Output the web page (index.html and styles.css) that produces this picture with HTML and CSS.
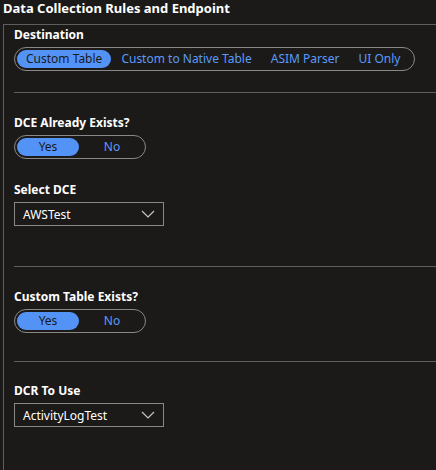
FILE: index.html
```html
<!DOCTYPE html>
<html>
<head>
<meta charset="utf-8">
<link rel="stylesheet" href="styles.css">
</head>
<body>
<div class="page">
  <div class="title">Data Collection Rules and Endpoint</div>
  <div class="box">
    <div class="section first">
      <div class="label">Destination</div>
      <div class="pills wide">
        <span class="pill sel">Custom Table</span>
        <span class="pill">Custom to Native Table</span>
        <span class="pill">ASIM Parser</span>
        <span class="pill">UI Only</span>
      </div>
    </div>
    <div class="sep"></div>
    <div class="section">
      <div class="label">DCE Already Exists?</div>
      <div class="pills toggle">
        <span class="pill sel">Yes</span>
        <span class="pill">No</span>
      </div>
      <div class="label lbl2">Select DCE</div>
      <div class="dropdown">
        <span>AWSTest</span>
        <svg class="chev" width="14" height="8" viewBox="0 0 14 8"><path d="M1 1 L7 7 L13 1" fill="none" stroke="#c8c6c4" stroke-width="1.2"/></svg>
      </div>
    </div>
    <div class="sep sep2"></div>
    <div class="section">
      <div class="label">Custom Table Exists?</div>
      <div class="pills toggle">
        <span class="pill sel">Yes</span>
        <span class="pill">No</span>
      </div>
    </div>
    <div class="sep sep3"></div>
    <div class="section">
      <div class="label">DCR To Use</div>
      <div class="dropdown">
        <span>ActivityLogTest</span>
        <svg class="chev" width="14" height="8" viewBox="0 0 14 8"><path d="M1 1 L7 7 L13 1" fill="none" stroke="#c8c6c4" stroke-width="1.2"/></svg>
      </div>
    </div>
  </div>
</div>
</body>
</html>
```

FILE: styles.css
```css
html, body {
  margin: 0;
  padding: 0;
  background: #1b1a19;
  height: 100%;
}
body {
  font-family: "Noto Sans", "Open Sans", sans-serif;
  font-size: 12px;
  color: #ffffff;
  overflow: hidden;
}
.page {
  padding: 0 0 0 3px;
}
.title {
  font-weight: 700;
  font-size: 13px;
  line-height: 16px;
  height: 24px;
}
.box {
  border-top: 1px solid #605e5c;
  border-left: 1px solid #605e5c;
  padding: 2px 0 0 10px;
  height: 460px;
}
.label {
  font-weight: 700;
  font-size: 12px;
  line-height: 16px;
  margin-bottom: 4px;
}
.pills {
  display: flex;
  align-items: center;
  border: 1px solid #8a8886;
  border-radius: 12px;
  height: 22px;
  box-sizing: content-box;
  padding: 0 2px;
  white-space: nowrap;
}
.wide {
  width: 395px;
  gap: 1px;
}
.pill {
  flex-shrink: 0;
  color: #5b9bf8;
  font-size: 12px;
  line-height: 18px;
  height: 18px;
  border-radius: 9px;
  padding: 0 9px;
}
.pill.sel {
  background: #5393f5;
  color: #1b1a19;
}
.toggle {
  width: 126px;
  gap: 2px;
}
.toggle .pill {
  width: 62px;
  text-align: center;
  padding: 0;
}
.sep {
  height: 1px;
  background: #605e5c;
  margin: 21px 0 22px 0;
}
.sep2 { margin: 40px 0 22px; }
.sep3 { margin: 28px 0 21px; }
.lbl2 { margin-top: 23px; }
.dropdown {
  height: 22px;
  border: 1px solid #8a8886;
  display: flex;
  align-items: center;
  justify-content: space-between;
  padding: 0 8px 0 8px;
  box-sizing: content-box;
  width: 132px;
}
```
